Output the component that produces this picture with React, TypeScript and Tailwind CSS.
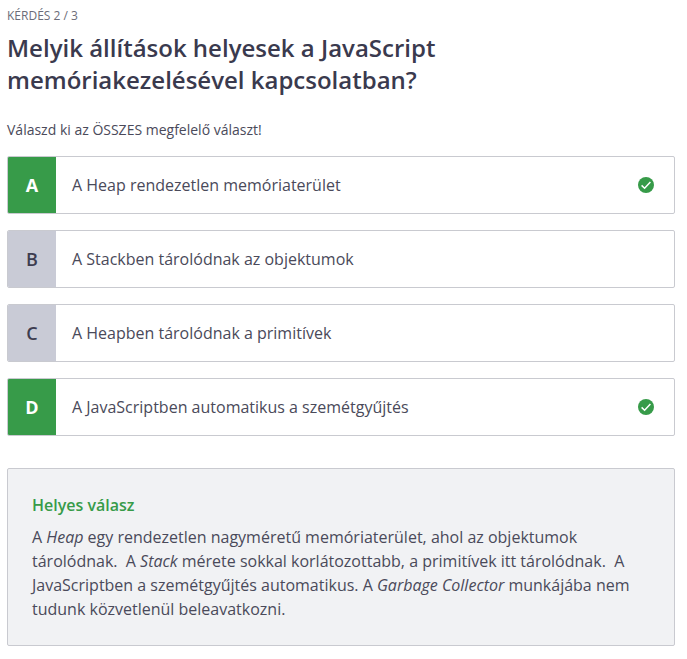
import React from "react";

type Answer = { id: string; text: string; correct: boolean };

const answers: Answer[] = [
  { id: "A", text: "A Heap rendezetlen memóriaterület", correct: true },
  { id: "B", text: "A Stackben tárolódnak az objektumok", correct: false },
  { id: "C", text: "A Heapben tárolódnak a primitívek", correct: false },
  { id: "D", text: "A JavaScriptben automatikus a szemétgyűjtés", correct: true },
];

function CheckBadge() {
  return (
    <svg viewBox="0 0 16 16" className="size-4 shrink-0" aria-hidden="true">
      <circle cx="8" cy="8" r="8" fill="#379b49" />
      <path d="M3.6 8.4 L6.6 11.2 L12.4 5.1" fill="none" stroke="#fff" strokeWidth="1.5" />
    </svg>
  );
}

function AnswerRow({ answer }: { answer: Answer }) {
  return (
    <button
      type="button"
      aria-pressed={answer.correct}
      className="flex h-[58px] w-full items-stretch overflow-hidden rounded-xs border border-[#c9cad0] bg-white text-left"
    >
      <span
        className={
          answer.correct
            ? "flex w-12 shrink-0 items-center justify-center bg-[#379b49] text-lg font-bold text-white"
            : "flex w-12 shrink-0 items-center justify-center bg-[#c9cbd6] text-lg font-semibold text-[#3d3d50]"
        }
      >
        {answer.id}
      </span>
      <span className="flex flex-1 items-center justify-between pr-5 pl-4 text-base">
        {answer.text}
        {answer.correct && <CheckBadge />}
      </span>
    </button>
  );
}

export default function App() {
  return (
    <main className="bg-white pt-2 pr-3 pb-3 pl-[7px] font-['Open_Sans',sans-serif] text-[#4a4a5a]">
      <p className="text-xs leading-4 text-[#6b6c78]">KÉRDÉS 2 / 3</p>
      <h1 className="mt-2 max-w-[520px] text-2xl leading-8 font-semibold text-[#3a3a4e]">
        Melyik állítások helyesek a JavaScript memóriakezelésével kapcsolatban?
      </h1>
      <p className="mt-6 text-sm leading-5">Válaszd ki az ÖSSZES megfelelő választ!</p>
      <div className="mt-4 flex flex-col gap-4">
        {answers.map((answer) => (
          <AnswerRow key={answer.id} answer={answer} />
        ))}
      </div>
      <section className="mt-8 rounded-xs border border-[#c9cad0] bg-[#f1f2f4] p-6">
        <h2 className="text-base leading-6 font-semibold text-[#379b49]">Helyes válasz</h2>
        <p className="mt-2 text-base leading-6">
          A <em>Heap</em> egy rendezetlen nagyméretű memóriaterület, ahol az objektumok tárolódnak.&nbsp; A{" "}
          <em>Stack</em> mérete sokkal korlátozottabb, a primitívek itt tárolódnak.&nbsp; A JavaScriptben a
          szemétgyűjtés automatikus. A <em>Garbage Collector</em> munkájába nem tudunk közvetlenül beleavatkozni.
        </p>
      </section>
    </main>
  );
}
